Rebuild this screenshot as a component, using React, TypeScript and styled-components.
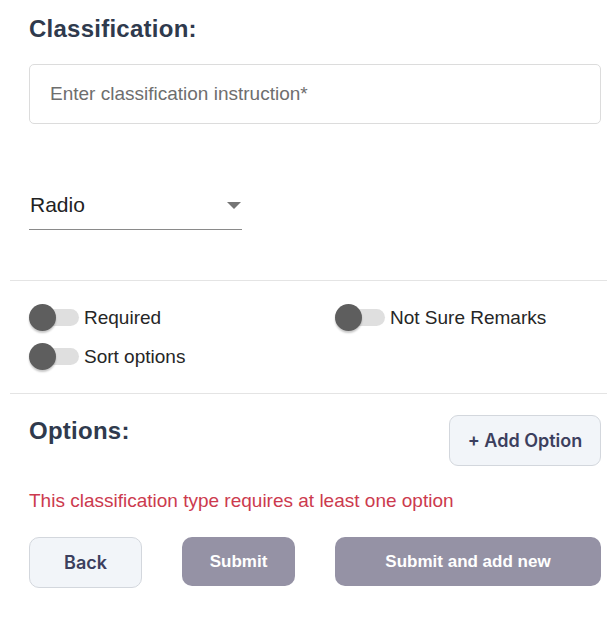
import React, { useState } from "react";
import styled, { createGlobalStyle } from "styled-components";

const GlobalStyle = createGlobalStyle`
  html, body { margin: 0; padding: 0; background: #ffffff; }
  body { font-family: "Liberation Sans", Arial, sans-serif; }
  * { box-sizing: border-box; }
`;

const Page = styled.div`
  width: 607px;
  padding: 0 0 0 10px;
`;

const Section = styled.div`
  padding: 0 6px 0 19px;
`;

const Heading = styled.h2`
  margin: 0;
  font-family: "Liberation Sans", Arial, sans-serif;
  font-weight: 700;
  font-size: 24px;
  line-height: 28px;
  letter-spacing: 0.25px;
  color: #2f3a4d;
`;

const TitleHeading = styled(Heading)`
  padding-top: 15px;
`;

const InstructionBox = styled.div`
  margin-top: 21px;
  height: 60px;
  border: 1px solid #dcdcdc;
  border-radius: 5px;
  display: flex;
  align-items: center;
  padding: 0 20px;
`;

const Placeholder = styled.span`
  font-size: 19px;
  color: #6e6e6e;
  font-family: "Liberation Sans", Arial, sans-serif;
`;

const SelectBox = styled.div`
  margin-top: 66px;
  width: 213px;
  height: 40px;
  border-bottom: 1px solid #8a8a8a;
  display: flex;
  align-items: center;
  justify-content: space-between;
  padding: 0 1px 9px 1px;
`;

const SelectValue = styled.span`
  font-size: 21px;
  color: #222222;
`;

const Arrow = styled.svg`
  width: 14px;
  height: 7px;
  margin-top: 1px;
`;

const Divider = styled.hr`
  margin: 0;
  border: none;
  border-top: 1px solid #e4e4e4;
`;

const TopDivider = styled(Divider)`
  margin-top: 50px;
`;

const ToggleGrid = styled.div`
  display: grid;
  grid-template-columns: 306px 1fr;
  row-gap: 12px;
  padding: 23px 6px 23px 19px;
`;

const ToggleItem = styled.label`
  display: flex;
  align-items: center;
  gap: 5px;
  height: 27px;
  cursor: pointer;
`;

const Track = styled.span`
  position: relative;
  width: 50px;
  height: 27px;
  display: inline-block;
  &::before {
    content: "";
    position: absolute;
    left: 10px;
    top: 5px;
    width: 40px;
    height: 17px;
    border-radius: 9px;
    background: #dfdfdf;
  }
`;

const Thumb = styled.span<{ $on: boolean }>`
  position: absolute;
  top: 0;
  left: ${(p) => (p.$on ? "23px" : "0")};
  width: 27px;
  height: 27px;
  border-radius: 50%;
  background: #5e5e5e;
  box-shadow: 0 2px 2px rgba(0, 0, 0, 0.22);
`;

const ToggleLabel = styled.span`
  font-size: 19px;
  color: #262626;
`;

const OptionsHeader = styled.div`
  display: flex;
  justify-content: space-between;
  align-items: flex-start;
  padding-top: 21px;
`;

const OptionsHeading = styled(Heading)`
  padding-top: 2px;
`;

const AddButton = styled.button`
  width: 152px;
  height: 51px;
  border: 1px solid #d3d7dd;
  border-radius: 9px;
  background: #f2f5f9;
  font-family: Inter, "Liberation Sans", sans-serif;
  font-weight: 600;
  font-size: 18px;
  color: #3c3f5e;
  cursor: pointer;
`;

const ErrorText = styled.p`
  margin: 24px 0 0 0;
  font-size: 19px;
  line-height: 22px;
  color: #cc3a4e;
`;

const ButtonRow = styled.div`
  display: grid;
  grid-template-columns: 113px 113px 1fr;
  column-gap: 40px;
  margin-top: 25px;
`;

const SecondaryButton = styled.button`
  height: 51px;
  border: 1px solid #d3d7dd;
  border-radius: 10px;
  background: #f2f5f9;
  font-family: Inter, "Liberation Sans", sans-serif;
  font-weight: 600;
  font-size: 18px;
  color: #3c3f5e;
  cursor: pointer;
`;

const PrimaryButton = styled.button`
  height: 49px;
  border: none;
  border-radius: 10px;
  background: #9592a5;
  font-family: "Liberation Sans", Arial, sans-serif;
  font-weight: 700;
  font-size: 17px;
  color: #ffffff;
  cursor: pointer;
`;

function Toggle({ label }: { label: string }) {
  const [on, setOn] = useState(false);
  return (
    <ToggleItem onClick={() => setOn(!on)}>
      <Track>
        <Thumb $on={on} />
      </Track>
      <ToggleLabel>{label}</ToggleLabel>
    </ToggleItem>
  );
}

export default function App() {
  return (
    <>
      <GlobalStyle />
      <Page>
        <Section>
          <TitleHeading>Classification:</TitleHeading>
          <InstructionBox>
            <Placeholder>Enter classification instruction*</Placeholder>
          </InstructionBox>
          <SelectBox>
            <SelectValue>Radio</SelectValue>
            <Arrow viewBox="0 0 14 7">
              <path d="M0 0 L14 0 L7 7 Z" fill="#757575" />
            </Arrow>
          </SelectBox>
        </Section>
        <TopDivider />
        <ToggleGrid>
          <Toggle label="Required" />
          <Toggle label="Not Sure Remarks" />
          <Toggle label="Sort options" />
        </ToggleGrid>
        <Divider />
        <Section>
          <OptionsHeader>
            <OptionsHeading>Options:</OptionsHeading>
            <AddButton>+ Add Option</AddButton>
          </OptionsHeader>
          <ErrorText>This classification type requires at least one option</ErrorText>
          <ButtonRow>
            <SecondaryButton>Back</SecondaryButton>
            <PrimaryButton>Submit</PrimaryButton>
            <PrimaryButton>Submit and add new</PrimaryButton>
          </ButtonRow>
        </Section>
      </Page>
    </>
  );
}
